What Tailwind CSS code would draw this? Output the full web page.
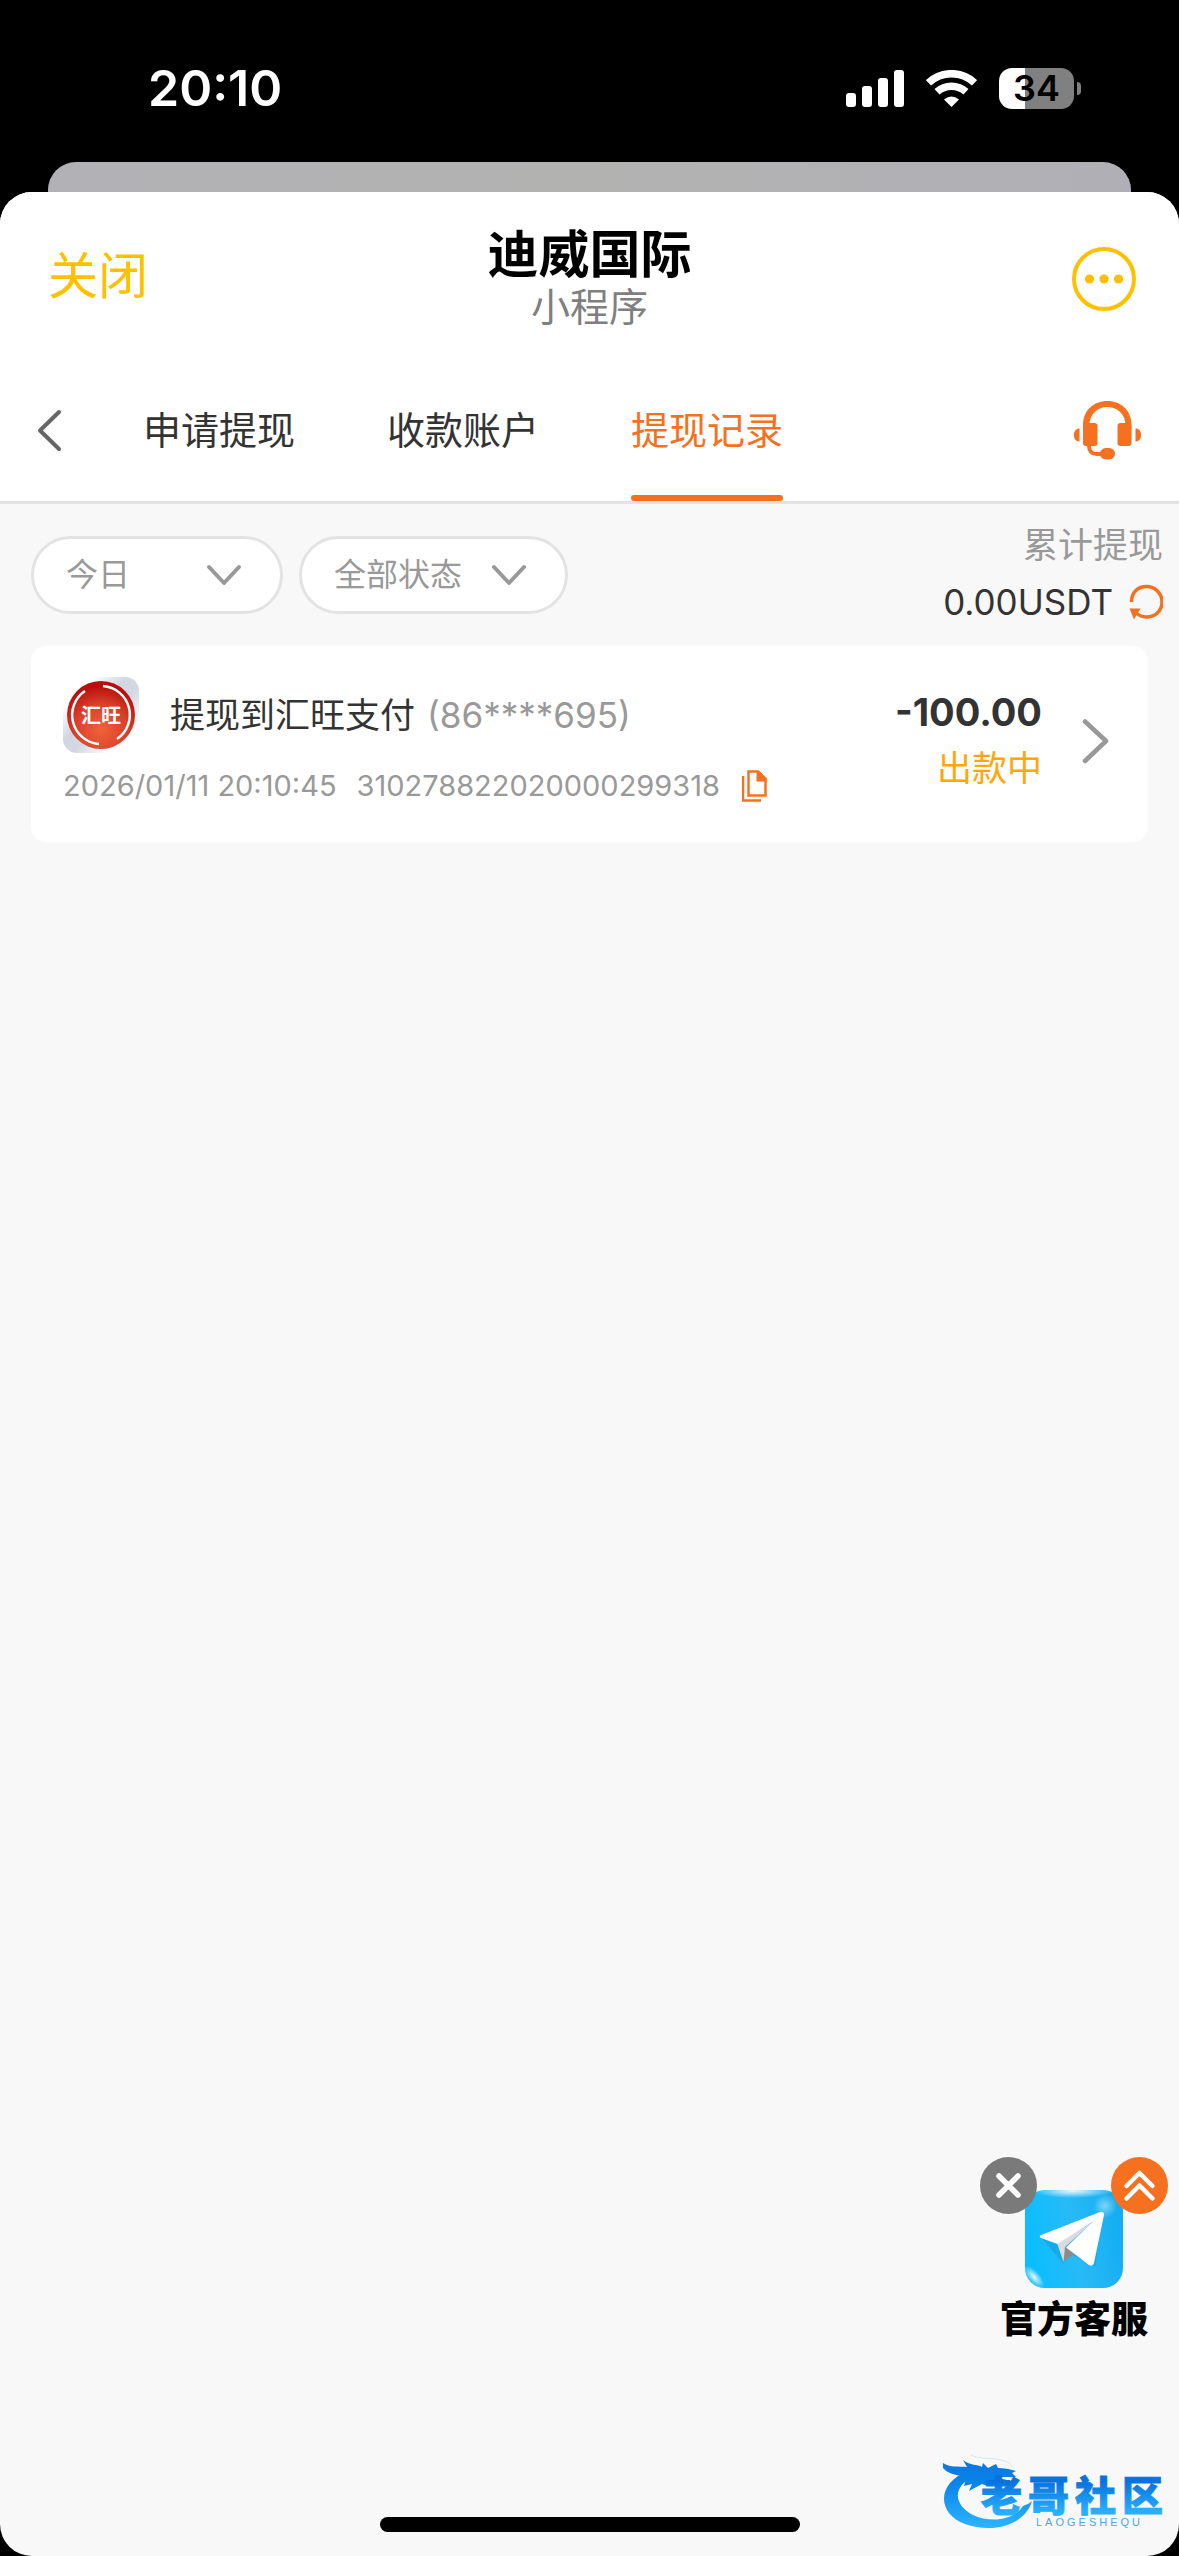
<!DOCTYPE html>
<html lang="zh-CN">
<head>
<meta charset="utf-8">
<meta name="viewport" content="width=device-width, initial-scale=1">
<title>迪威国际</title>
<script src="https://cdn.jsdelivr.net/npm/@tailwindcss/browser@4"></script>
</head>
<body class="flex min-h-screen flex-col bg-black font-['Inter','Noto_Sans_CJK_SC',sans-serif] text-[#333]">

<!-- Status bar -->
<div class="flex h-[162px] items-center justify-between pt-[14px] pr-[98px] pl-[148px]">
  <time class="text-[50px] leading-[60px] font-semibold text-white">20:10</time>
  <div class="flex items-center gap-[22px]">
    <svg class="h-[37px] w-[58px]" viewBox="0 0 58 37" fill="#fff" aria-label="信号"><rect y="23" width="10" height="14" rx="3"/><rect x="16" y="16" width="10" height="21" rx="3"/><rect x="32" y="8" width="10" height="29" rx="3"/><rect x="48" width="10" height="37" rx="3"/></svg>
    <svg class="h-[37px] w-[51px]" viewBox="0 0 51 37" fill="none" stroke="#fff" aria-label="无线网络"><path d="M2.5 12.8a33.500 33.500 0 0 1 46 0" stroke-width="7.500"/><path d="M11 21.800a21.500 21.500 0 0 1 29 0" stroke-width="7.500"/><path d="M18 29.500q7.500-6 15 0L25.500 37z" fill="#fff" stroke="none"/></svg>
    <div class="flex items-center gap-[3px]">
      <div class="flex h-[41px] w-[75px] items-center justify-center rounded-[13px] bg-linear-to-r from-white from-35% to-[#808080] to-35% text-[36px] leading-[41px] font-semibold text-black">34</div>
      <div class="h-[13px] w-[4px] rounded-r-full bg-[#808080]"></div>
    </div>
  </div>
</div>

<!-- Edge of the page behind the sheet -->
<div class="mx-12 -mb-8 h-[62px] rounded-t-[28px] bg-linear-to-r from-[#b2b2b6] via-[#b2b2b1] to-[#b0afb6]"></div>

<main class="relative flex flex-1 flex-col overflow-hidden rounded-[32px] bg-[#f8f8f8]">
  <header class="border-b-[3px] border-[#e3e3e3] bg-white">
    <div class="grid h-[167px] grid-cols-3 items-center px-[43px] pt-[6px]">
      <button type="button" class="ml-[5px] justify-self-start pb-[6px] text-[50px] leading-[60px] text-[#ffc000]">关闭</button>
      <div class="text-center">
        <h1 class="text-[51px] leading-[56px] font-bold text-black">迪威国际</h1>
        <p class="text-[39px] leading-[48px] text-[#7f7f7f]">小程序</p>
      </div>
      <button type="button" aria-label="更多" class="justify-self-end">
        <svg class="size-16" viewBox="0 0 64 64" fill="#ffc000"><circle cx="32" cy="32" r="30" fill="none" stroke="#ffc000" stroke-width="4"/><circle cx="17.500" cy="32" r="4.600"/><circle cx="32" cy="32" r="4.600"/><circle cx="46.500" cy="32" r="4.600"/></svg>
      </button>
    </div>
    <nav class="flex h-[142px] items-center pr-[38px] pl-[36px]">
      <button type="button" aria-label="返回" class="mr-[80px]">
        <svg class="h-[44px] w-[27px]" viewBox="0 0 27 44" fill="none" stroke="#666" stroke-width="4" stroke-linecap="round" stroke-linejoin="round"><path d="M23 4 4 22.500 23 41"/></svg>
      </button>
      <div class="flex gap-[92px] self-stretch text-[38px]">
        <a href="#apply" class="flex items-center border-b-[6px] border-transparent pt-[6px]">申请提现</a>
        <a href="#accounts" class="flex items-center border-b-[6px] border-transparent pt-[6px]">收款账户</a>
        <a href="#records" aria-current="page" class="flex flex-col justify-between pt-[6px] text-[#f57120]"><span class="my-auto">提现记录</span><span class="h-[6px] rounded-full bg-[#f57120]"></span></a>
      </div>
      <button type="button" aria-label="客服" class="ml-auto">
        <svg class="h-[60px] w-[67px]" viewBox="0 0 67 60" fill="#f57120"><path d="M9 28V25C9 10 20 1 33.300 1S57.500 10 57.500 25v3h-6v-4C51 14 43 7 33.300 7S16 14 15.500 24v4z"/><rect x="9" y="23" width="14.500" height="23" rx="3"/><rect x="43.500" y="23" width="14" height="23" rx="3"/><path d="M5.500 28.500v13C2 41.500 0 39 0 35s2-6.500 5.500-6.500zM61.500 28.500v13c3.500 0 5.500-2.500 5.500-6.500s-2-6.500-5.500-6.500z"/><path d="M15 44v2c0 5 3 8 7.500 8H30" fill="none" stroke="#f57120" stroke-width="4"/><rect x="26" y="48" width="15" height="11.500" rx="5.700"/></svg>
      </button>
    </nav>
  </header>

  <section class="flex items-start justify-between pt-[20px] pr-[16px] pl-[31px]">
    <form class="flex gap-4 pt-3 text-[32px] text-[#999]">
      <label class="relative">
        <select aria-label="日期" class="h-[78px] w-[252px] appearance-none rounded-full border-[3px] border-[#e3e3e3] bg-white pl-[32px]"><option>今日</option></select>
        <svg class="pointer-events-none absolute top-[27px] right-[41px] h-[24px] w-[36px]" viewBox="0 0 36 24" fill="none" stroke="#999" stroke-width="4" stroke-linecap="round" stroke-linejoin="round"><path d="m3 4 15 16L33 4"/></svg>
      </label>
      <label class="relative">
        <select aria-label="状态" class="h-[78px] w-[269px] appearance-none rounded-full border-[3px] border-[#e3e3e3] bg-white pl-[32px]"><option>全部状态</option></select>
        <svg class="pointer-events-none absolute top-[27px] right-[41px] h-[24px] w-[36px]" viewBox="0 0 36 24" fill="none" stroke="#999" stroke-width="4" stroke-linecap="round" stroke-linejoin="round"><path d="m3 4 15 16L33 4"/></svg>
      </label>
    </form>
    <div class="text-right text-[35px]">
      <p class="leading-[42px] text-[#999]">累计提现</p>
      <p class="mt-[15px] flex items-center justify-end gap-[16px] leading-[42px]">0.00USDT
        <button type="button" aria-label="刷新"><svg class="h-[36px] w-[34px]" viewBox="0 0 34 36"><path d="M2.500 18C2.500 8 9 2.500 17.500 2.500S33 9.500 33 18s-6.500 15-15.500 15c-4.500 0-8.500-2-11-5" fill="none" stroke="#f57120" stroke-width="3.500"/><path d="M.5 24.500h11L5 35.500z" fill="#f57120"/></svg></button>
      </p>
    </div>
  </section>

  <article class="mx-[31px] mt-[23px] flex h-[196px] items-start rounded-[15px] bg-white pt-[31px] pr-[38px] pl-[32px]">
    <div>
      <div class="flex items-center text-[35px] leading-[42px]">
        <svg class="mr-[31px] size-[76px]" viewBox="0 0 76 76" aria-hidden="true">
          <defs>
            <linearGradient id="tile" x1="0" y1="0" x2="1" y2="1"><stop offset=".2" stop-color="#fff"/><stop offset=".42" stop-color="#d3d7e2"/><stop offset=".56" stop-color="#d3d7e2"/><stop offset=".8" stop-color="#fff"/></linearGradient>
            <radialGradient id="coin" cx=".5" cy=".72" r=".65"><stop offset="0" stop-color="#f0623a"/><stop offset=".6" stop-color="#d8402a"/><stop offset="1" stop-color="#b80f0c"/></radialGradient>
          </defs>
          <rect width="76" height="76" rx="14" fill="url(#tile)"/>
          <circle cx="38" cy="38" r="34" fill="url(#coin)"/>
          <path d="M40 9a29 29 0 0 1 14 53" fill="none" stroke="#fff" stroke-width="2.500"/><path d="M36 67a29 29 0 0 1-14-53" fill="none" stroke="#fff" stroke-width="2.500"/>
          <text x="38" y="45.500" text-anchor="middle" fill="#fff" font-size="20" font-weight="700" font-family="Noto Sans CJK SC, sans-serif">汇旺</text>
        </svg>
        <h2>提现到汇旺支付</h2>
        <span class="ml-[12px] text-[#999]">(86****695)</span>
      </div>
      <div class="mt-[16px] flex items-center text-[29px] leading-[34px] text-[#999]">
        <time>2026/01/11 20:10:45</time>
        <span class="ml-[20px]">310278822020000299318</span>
        <button type="button" aria-label="复制" class="ml-[22px]"><svg class="h-[32px] w-[25px]" viewBox="0 0 25 32" fill="none" stroke="#f57120"><path d="M1 6v24.500h18" stroke-width="2.500"/><path d="M6.500 1.500h9.500L23.500 9v16.500h-17z" stroke-width="2.500"/><path d="M14.500 1H17l7.500 7v3.500h-10z" fill="#f57120" stroke="none"/></svg></button>
      </div>
    </div>
    <div class="ml-auto text-right">
      <p class="mt-[12px] text-[38px] leading-[46px] font-bold">-100.00</p>
      <p class="mt-[12px] text-[35px] leading-[42px] text-[#ffa70a]">出款中</p>
    </div>
    <a href="#detail" aria-label="查看详情" class="mt-[39px] ml-[38px]">
      <svg class="h-[48px] w-[30px]" viewBox="0 0 30 48" fill="none" stroke="#999" stroke-width="4.500" stroke-linecap="round" stroke-linejoin="round"><path d="M5 5.500 26 25 5 45"/></svg>
    </a>
  </article>

  <!-- Floating customer service widget -->
  <aside class="absolute right-[11px] bottom-[212px] flex w-[188px] flex-col">
    <div class="z-10 flex justify-between">
      <button type="button" aria-label="关闭客服" class="size-[57px] rounded-full"><svg viewBox="0 0 57 57"><circle cx="28.500" cy="28.500" r="28.500" fill="#7a7a7a"/><path d="m19 19 19 19M38 19 19 38" stroke="#fff" stroke-width="5.500" stroke-linecap="round"/></svg></button>
      <button type="button" aria-label="回到顶部" class="size-[57px] rounded-full"><svg viewBox="0 0 57 57"><circle cx="28.500" cy="28.500" r="28.500" fill="#f57120"/><path d="m15.500 29 13-13 13 13M15.500 41.500l13-13 13 13" fill="none" stroke="#fff" stroke-width="4.500" stroke-linecap="round" stroke-linejoin="round"/></svg></button>
    </div>
    <a href="#support" class="-mt-[24px] flex flex-col items-center">
      <svg class="size-[98px]" viewBox="0 0 98 98" aria-hidden="true">
        <defs>
          <linearGradient id="sky" x1="0" y1=".6" x2="1" y2=".4"><stop offset="0" stop-color="#08beff"/><stop offset=".5" stop-color="#28baf6"/><stop offset="1" stop-color="#14adf2"/></linearGradient>
          <radialGradient id="shine"><stop offset="0" stop-color="#fff" stop-opacity=".9"/><stop offset="1" stop-color="#fff" stop-opacity="0"/></radialGradient>
          <clipPath id="tileClip"><rect width="98" height="98" rx="20"/></clipPath>
        </defs>
        <g clip-path="url(#tileClip)">
          <rect width="98" height="98" fill="url(#sky)"/>
          <ellipse cx="48" cy="1" rx="40" ry="7" fill="url(#shine)"/>
          <ellipse cx="9" cy="87" rx="14" ry="6" transform="rotate(48 9 87)" fill="url(#shine)"/>
          <circle cx="80" cy="16" r="12" fill="url(#shine)" opacity=".5"/>
        </g>
        <path d="M16 48 78 24 70 77 40 61l-1 13z" fill="#0a84c4" opacity=".3"/>
        <path d="M38 72 40 55 52 62z" fill="#8b8b8b"/>
        <path d="M32 53 68 32 40 57 38.500 72z" fill="#d9dadd"/>
        <path d="M15 45.500Q14 47 16 48L32.500 54 68 31.500 41 57.500 64 75q4 2 5-2L79 25q0-4-4-3z" fill="#fff"/>
      </svg>
      <span class="mt-[8px] text-[37px] leading-[48px] font-black text-black">官方客服</span>
    </a>
  </aside>

  <!-- Community logo -->
  <svg class="absolute right-[14px] bottom-[24px] h-[80px] w-[226px]" viewBox="0 0 226 80" role="img" aria-label="老哥社区 LAOGESHEQU">
    <defs><linearGradient id="brand" gradientUnits="userSpaceOnUse" x1="0" y1="10" x2="0" y2="76"><stop offset="0" stop-color="#0a76e0"/><stop offset=".35" stop-color="#0c86ea"/><stop offset="1" stop-color="#2db4ff"/></linearGradient>
    <linearGradient id="brandText" gradientUnits="userSpaceOnUse" x1="0" y1="30" x2="0" y2="60"><stop offset="0" stop-color="#0873dc"/><stop offset="1" stop-color="#27b0ff"/></linearGradient></defs>
    <g fill="url(#brand)">
      <path d="M29 19C-3 31-2 62 26 72c28 10 60 1 67-23-2 2-6 4-9 5-9 15-34 17-50 9C13 52 14 33 36 24z"/>
      <path d="M4 11c7 5 15 3 24 4l-4-7c8 6 14 4 19 7l1-4 5 5 8-4 2 4c5 0 12 1 18 3l-4 2 4 4c-6 1-12-1-17 1l12 3-4 4-15-2-5 3-5-2-13 7 3-7-8 2 2-8c-9-4-17-3-23-10z"/>
    </g>
    <path d="M32 3c10 5 20 2 30 5 6 1 10 4 13 8" fill="none" stroke="#b9dcef" stroke-width="1" opacity=".6"/>
    <g fill="url(#brandText)" stroke="url(#brandText)" stroke-width="1" font-size="41" font-weight="900" font-family="Noto Sans CJK SC, sans-serif">
      <text x="42" y="59">老</text><text x="89" y="59">哥</text><text x="136" y="59">社</text><text x="183" y="59">区</text>
    </g>
    <text x="97" y="74" fill="#4aa8ea" font-size="11" letter-spacing="3" font-family="Liberation Sans, sans-serif">LAOGESHEQU</text>
  </svg>

  <div class="mx-auto mt-auto mb-[24px] h-[15px] w-[420px] rounded-full bg-black"></div>
</main>
</body>
</html>
